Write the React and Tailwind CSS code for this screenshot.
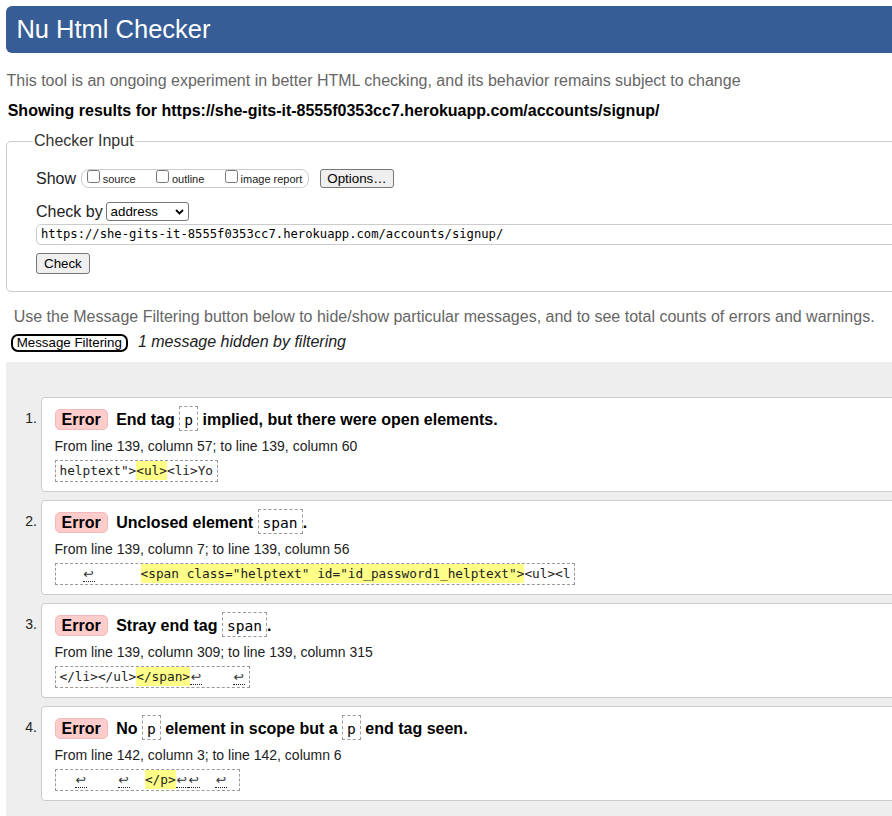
import React from "react";

function Code({ children }) {
  return (
    <span className="inline-block border border-dashed border-[#999999] px-[4px] pt-[2px] font-['DejaVu_Sans_Mono',monospace] text-[14.6px] font-normal leading-[21px] text-black">
      {children}
    </span>
  );
}

function Lf() {
  return (
    <span className="inline-block w-[12px] border-b border-dotted border-[#222222] text-center font-['DejaVu_Sans',sans-serif] text-[12.5px] leading-[15px] text-[#333333]">
      ↩
    </span>
  );
}

function Hl({ children }) {
  return <span className="bg-[#ffff88] py-[2px]">{children}</span>;
}

function Item({ n, title, from, extract }) {
  return (
    <div className="flex">
      <div className="w-[35px] shrink-0 pr-[4px] pt-[13px] text-right text-[14px] leading-[16px] text-[#222222]">
        {n}.
      </div>
      <div className="flex-1 rounded-[4px] border border-[#cccccc] bg-white pb-[8.5px] pl-[12.5px] pt-[7.5px]">
        <div className="h-[26px] whitespace-nowrap text-[16px] font-bold leading-[26px] text-black">
          <span className="mr-[8.5px] inline-block rounded-[5px] border border-[#f2baba] bg-[#ffcccc] px-[6px] leading-[19px]">
            Error
          </span>
          {title}
        </div>
        <div className="mt-[4.5px] text-[14px] leading-[20px] text-[#222222]">{from}</div>
        <div className="mt-[4px] w-fit whitespace-pre border border-dashed border-[#999999] px-[4px] font-['DejaVu_Sans_Mono',monospace] text-[12.75px] leading-[20px] text-[#222222]">
          {extract}
        </div>
      </div>
    </div>
  );
}

function Check({ label }) {
  return (
    <div className="flex items-start">
      <input type="checkbox" className="m-0 h-[13px] w-[13px] shrink-0" />
      <span className="ml-[2.5px] mt-[2.7px] text-[11px] leading-[13px] text-[#222222]">{label}</span>
    </div>
  );
}

export default function App() {
  return (
    <div className="h-[816px] w-[892px] overflow-hidden bg-white font-['Liberation_Sans',Arial,sans-serif] text-[16px] leading-[20px] text-[#222222]">
      <div className="w-[1200px]">
        <div className="ml-[6px] mt-[6px] h-[47px] rounded-l-[6px] bg-[#365d95] pl-[10.4px] text-[25.5px] leading-[47px] text-white">
          Nu Html Checker
        </div>
        <p className="ml-[6.5px] mt-[17.5px] leading-[20px] text-[#666666]">
          This tool is an ongoing experiment in better HTML checking, and its behavior remains subject to change
        </p>
        <p className="ml-[7.7px] mt-[10px] font-bold leading-[20px] text-black">
          Showing results for https://she-gits-it-8555f0353cc7.herokuapp.com/accounts/signup/
        </p>

        <fieldset className="ml-[6px] mt-[10.5px] rounded-[5px] border border-[#cccccc] pb-[17.3px]">
          <legend className="ml-[26px] px-[1px] text-[16px] leading-[20px] text-[#333333]">Checker Input</legend>
          <div className="pl-[29px] pr-[20px]">
            <div className="mt-[17.7px] flex h-[20px] items-center">
              <span className="leading-[20px] text-[#222222]">Show</span>
              <div className="ml-[4.7px] flex h-[18.4px] items-start gap-[20.7px] rounded-[8px] border border-[#cccccc] pl-[5.5px] pr-[6px]">
                <Check label="source" />
                <Check label="outline" />
                <Check label="image report" />
              </div>
              <button className="ml-[11px] h-[19.6px] rounded-[3px] border border-[#767676] bg-[#efefef] px-[6px] text-[13.33px] leading-[17px] text-black">
                Options…
              </button>
            </div>

            <div className="mt-[12.6px] flex h-[20.5px] items-center">
              <span className="leading-[20px] text-[#222222]">Check by</span>
              <div className="ml-[3.6px] flex h-[18.4px] w-[82.4px] items-center justify-between rounded-[3px] border border-[#767676] bg-white pl-[3.3px] pr-[4px] text-[13.33px] leading-[16px] text-black">
                <span>address</span>
                <svg width="9" height="6" viewBox="0 0 9 6" className="block">
                  <path d="M1 1 L4.5 4.5 L8 1" fill="none" stroke="#000" strokeWidth="1.8" />
                </svg>
              </div>
            </div>

            <input
              readOnly
              value="https://she-gits-it-8555f0353cc7.herokuapp.com/accounts/signup/"
              className="mt-[1.9px] block h-[21px] w-full rounded-[5px] border border-[#cccccc] bg-white pl-[4px] font-['DejaVu_Sans_Mono',monospace] text-[12.2px] text-black outline-none"
            />

            <button className="mt-[8.6px] block h-[20.4px] rounded-[3px] border border-[#767676] bg-[#efefef] px-[7px] text-[13.33px] leading-[17px] text-black">
              Check
            </button>
          </div>
        </fieldset>

        <p className="ml-[13.7px] mt-[14.8px] leading-[20px] text-[#666666]">
          Use the Message Filtering button below to hide/show particular messages, and to see total counts of errors and warnings.
        </p>

        <div className="ml-[10.7px] mt-[5.6px] flex items-baseline">
          <button className="h-[18px] rounded-[7px] border-2 border-black px-[4px] text-[13.33px] leading-[14px] text-black">
            Message Filtering
          </button>
          <span className="ml-[10px] italic leading-[20px] text-[#222222]">1 message hidden by filtering</span>
        </div>

        <div className="ml-[6px] mt-[9.3px] flex flex-col gap-[8.5px] bg-[#eeeeee] pb-[30px] pt-[35.5px]">
          <Item
            n={1}
            title={
              <>
                End tag <Code>p</Code> implied, but there were open elements.
              </>
            }
            from="From line 139, column 57; to line 139, column 60"
            extract={
              <>
                {'helptext">'}
                <Hl>{"<ul>"}</Hl>
                {"<li>Yo"}
              </>
            }
          />
          <Item
            n={2}
            title={
              <>
                Unclosed element <Code>span</Code>.
              </>
            }
            from="From line 139, column 7; to line 139, column 56"
            extract={
              <>
                {"   "}
                <Lf />
                {"      "}
                <Hl>{'<span class="helptext" id="id_password1_helptext">'}</Hl>
                {"<ul><l"}
              </>
            }
          />
          <Item
            n={3}
            title={
              <>
                Stray end tag <Code>span</Code>.
              </>
            }
            from="From line 139, column 309; to line 139, column 315"
            extract={
              <>
                {"</li></ul>"}
                <Hl>{"</span>"}</Hl>
                <Lf />
                {"    "}
                <Lf />
              </>
            }
          />
          <Item
            n={4}
            title={
              <>
                No <Code>p</Code> element in scope but a <Code>p</Code> end tag seen.
              </>
            }
            from="From line 142, column 3; to line 142, column 6"
            extract={
              <>
                {"  "}
                <Lf />
                {"    "}
                <Lf />
                {"  "}
                <Hl>{"</p>"}</Hl>
                <Lf />
                <Lf />
                {"  "}
                <Lf />
                {" "}
              </>
            }
          />
        </div>
      </div>
    </div>
  );
}
